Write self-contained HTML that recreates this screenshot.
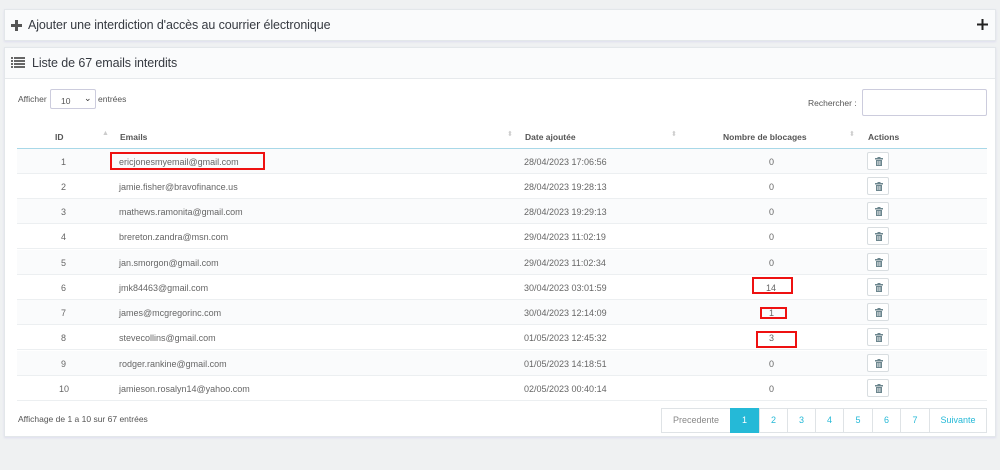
<!DOCTYPE html>
<html><head><meta charset="utf-8"><style>
*{box-sizing:border-box;margin:0;padding:0}
body{width:1000px;height:470px;background:#eff1f2;font-family:"Liberation Sans",sans-serif;color:#555;position:relative;overflow:hidden}
.abs{position:absolute}
.p1{left:4px;top:9px;width:992px;height:32px;background:#fafbfc;border:1px solid #e3e7ea;box-shadow:0 1px 2px #dde}
.p2{left:4px;top:47px;width:992px;height:390px;background:#fff;border:1px solid #e3e7ea;box-shadow:0 1px 2px #dde}
.ph{left:0;top:0;width:990px;height:31px;background:#fafbfc;border-bottom:1px solid #e6e9ec}
.t{font-size:12.5px;color:#363a41;letter-spacing:-.1px}
.row{left:17px;width:970px;height:25px;border-bottom:1px solid #eceff1;font-size:9px;color:#666}
.row span{position:absolute;top:8px}
.btn{position:absolute;left:850px;top:3px;width:22px;height:18px;border:1px solid #d8dde0;border-radius:2px;background:#fff}
.btn svg{position:absolute;left:7px;top:4px}
.th{top:132px;font-size:8.5px;font-weight:bold;color:#555}
.srt{color:#ccc;font-size:7px;top:130px}
.red{border:2px solid #e11;position:absolute}
.pg{top:408px;height:25px;border:1px solid #dfe3e6;font-size:9px;color:#25b9d7;text-align:center;line-height:23px;background:#fff}
</style></head><body>
<div class="abs p1">
 <svg class="abs" style="left:6px;top:10px" width="11" height="11"><rect x="4" y="0" width="3" height="11" fill="#555"/><rect x="0" y="4" width="11" height="3" fill="#555"/></svg>
 <div class="abs t" style="left:23px;top:8px">Ajouter une interdiction d'accès au courrier électronique</div>
 <svg class="abs" style="left:972px;top:9px" width="11" height="11"><rect x="4.5" y="0" width="2" height="11" fill="#222"/><rect x="0" y="4.5" width="11" height="2" fill="#222"/></svg>
</div>
<div class="abs p2">
 <div class="abs ph"></div>
 <svg class="abs" style="left:6px;top:9px" width="14" height="11"><g fill="#666"><rect x="0" y="0" width="2" height="2"/><rect x="0" y="3" width="2" height="2"/><rect x="0" y="6" width="2" height="2"/><rect x="0" y="9" width="2" height="2"/><rect x="3" y="0" width="11" height="2"/><rect x="3" y="3" width="11" height="2"/><rect x="3" y="6" width="11" height="2"/><rect x="3" y="9" width="11" height="2"/></g></svg>
 <div class="abs t" style="left:27px;top:8px">Liste de 67 emails interdits</div>
</div>
<div class="abs" style="left:18px;top:94px;font-size:8.5px">Afficher</div>
<div class="abs" style="left:50px;top:89px;width:46px;height:20px;border:1px solid #ccd;border-radius:2px;font-size:8.5px;padding:6px 0 0 10px;background:#fff">10<span style="position:absolute;left:33px;top:3px;font-size:9px;color:#333">⌄</span></div>
<div class="abs" style="left:98px;top:94px;font-size:8.5px">entrées</div>
<div class="abs" style="left:808px;top:98px;font-size:8.5px">Rechercher :</div>
<div class="abs" style="left:862px;top:89px;width:125px;height:27px;border:1px solid #ccd;border-radius:2px;background:#fff"></div>
<div class="abs th" style="left:55px">ID</div><div class="abs srt" style="left:102px">▲</div>
<div class="abs th" style="left:120px">Emails</div><div class="abs srt" style="left:507px">⬍</div>
<div class="abs th" style="left:525px">Date ajoutée</div><div class="abs srt" style="left:671px">⬍</div>
<div class="abs th" style="left:723px">Nombre de blocages</div><div class="abs srt" style="left:849px">⬍</div>
<div class="abs th" style="left:868px">Actions</div>
<div class="abs" style="left:17px;top:148px;width:970px;height:1px;background:#a8d8e8"></div>
<svg width="0" height="0" style="position:absolute"><defs><g id="tr"><rect x="0" y="1" width="8" height="1.5" fill="#6c868e"/><rect x="2.5" y="0" width="3" height="1.5" fill="#6c868e"/><rect x="1" y="3" width="6" height="6" fill="#6c868e"/><rect x="2.5" y="4" width=".8" height="4" fill="#fff"/><rect x="4.5" y="4" width=".8" height="4" fill="#fff"/></g></defs></svg>
<div class="abs row" style="top:149px;background:#fafbfc"><span style="left:44px">1</span><span style="left:102px">ericjonesmyemail@gmail.com</span><span style="left:507px">28/04/2023 17:06:56</span><span style="left:752px">0</span><div class="btn"><svg width="8" height="9"><use href="#tr"/></svg></div></div>
<div class="abs row" style="top:174px"><span style="left:44px">2</span><span style="left:102px">jamie.fisher@bravofinance.us</span><span style="left:507px">28/04/2023 19:28:13</span><span style="left:752px">0</span><div class="btn"><svg width="8" height="9"><use href="#tr"/></svg></div></div>
<div class="abs row" style="top:199px;background:#fafbfc"><span style="left:44px">3</span><span style="left:102px">mathews.ramonita@gmail.com</span><span style="left:507px">28/04/2023 19:29:13</span><span style="left:752px">0</span><div class="btn"><svg width="8" height="9"><use href="#tr"/></svg></div></div>
<div class="abs row" style="top:224px"><span style="left:44px">4</span><span style="left:102px">brereton.zandra@msn.com</span><span style="left:507px">29/04/2023 11:02:19</span><span style="left:752px">0</span><div class="btn"><svg width="8" height="9"><use href="#tr"/></svg></div></div>
<div class="abs row" style="top:250px;background:#fafbfc"><span style="left:44px">5</span><span style="left:102px">jan.smorgon@gmail.com</span><span style="left:507px">29/04/2023 11:02:34</span><span style="left:752px">0</span><div class="btn"><svg width="8" height="9"><use href="#tr"/></svg></div></div>
<div class="abs row" style="top:275px"><span style="left:44px">6</span><span style="left:102px">jmk84463@gmail.com</span><span style="left:507px">30/04/2023 03:01:59</span><span style="left:749px">14</span><div class="btn"><svg width="8" height="9"><use href="#tr"/></svg></div></div>
<div class="abs row" style="top:300px;background:#fafbfc"><span style="left:44px">7</span><span style="left:102px">james@mcgregorinc.com</span><span style="left:507px">30/04/2023 12:14:09</span><span style="left:752px">1</span><div class="btn"><svg width="8" height="9"><use href="#tr"/></svg></div></div>
<div class="abs row" style="top:325px"><span style="left:44px">8</span><span style="left:102px">stevecollins@gmail.com</span><span style="left:507px">01/05/2023 12:45:32</span><span style="left:752px">3</span><div class="btn"><svg width="8" height="9"><use href="#tr"/></svg></div></div>
<div class="abs row" style="top:351px;background:#fafbfc"><span style="left:44px">9</span><span style="left:102px">rodger.rankine@gmail.com</span><span style="left:507px">01/05/2023 14:18:51</span><span style="left:752px">0</span><div class="btn"><svg width="8" height="9"><use href="#tr"/></svg></div></div>
<div class="abs row" style="top:376px"><span style="left:42px">10</span><span style="left:102px">jamieson.rosalyn14@yahoo.com</span><span style="left:507px">02/05/2023 00:40:14</span><span style="left:752px">0</span><div class="btn"><svg width="8" height="9"><use href="#tr"/></svg></div></div>
<div class="red" style="left:110px;top:152px;width:155px;height:18px"></div>
<div class="red" style="left:752px;top:277px;width:41px;height:17px"></div>
<div class="red" style="left:760px;top:307px;width:27px;height:12px"></div>
<div class="red" style="left:756px;top:331px;width:41px;height:17px"></div>
<div class="abs" style="left:18px;top:414px;font-size:8.5px">Affichage de 1 a 10 sur 67 entrées</div>
<div class="abs pg" style="left:661px;width:70px;color:#888">Precedente</div>
<div class="abs pg" style="left:730px;width:29px;background:#25b9d7;border-color:#25b9d7;color:#fff">1</div>
<div class="abs pg" style="left:759px;width:29px">2</div>
<div class="abs pg" style="left:787px;width:29px">3</div>
<div class="abs pg" style="left:815px;width:29px">4</div>
<div class="abs pg" style="left:843px;width:30px">5</div>
<div class="abs pg" style="left:872px;width:29px">6</div>
<div class="abs pg" style="left:900px;width:30px">7</div>
<div class="abs pg" style="left:929px;width:58px">Suivante</div>
</body></html>
